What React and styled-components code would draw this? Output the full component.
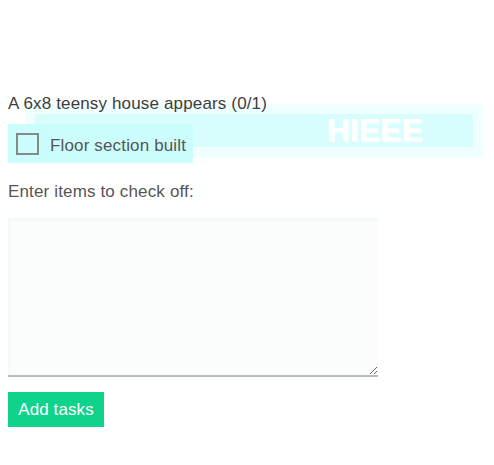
import React from "react";
import styled, { createGlobalStyle } from "styled-components";

const Global = createGlobalStyle`
  html, body { margin: 0; padding: 0; background: #fff; }
  body { font-family: "Liberation Sans", Arial, Helvetica, sans-serif; }
`;

const Page = styled.div`
  position: relative;
  padding: 94px 8px 20px 8px;
  display: flex;
  flex-direction: column;
  align-items: flex-start;
  letter-spacing: 0.15px;
`;

const Title = styled.div`
  font-size: 17px;
  line-height: 20px;
  color: #3d3d3d;
  position: relative;
  z-index: 1;
`;

const Overlay = styled.div`
  position: absolute;
  left: 25px;
  top: 104px;
  width: 458px;
  height: 53px;
  padding: 10px;
  box-sizing: border-box;
  background: #effefe;
  z-index: 0;
  display: flex;
`;

const OverlayInner = styled.div`
  flex: 1;
  background: #d8fdfd;
  display: flex;
  align-items: center;
  justify-content: flex-end;
  padding-right: 50px;
`;

const Shout = styled.span`
  font-size: 32px;
  font-weight: bold;
  line-height: 33px;
  letter-spacing: 0;
  color: #ffffff;
  text-shadow: 1px 1px 2px rgba(255, 255, 255, 0.9);
  filter: blur(0.3px);
`;

const TaskRow = styled.label`
  position: relative;
  z-index: 1;
  margin-top: 10px;
  height: 39px;
  box-sizing: border-box;
  padding: 0 7px 0 8px;
  background: #ccfdfd;
  display: flex;
  align-items: center;
  gap: 11px;
  font-size: 17px;
  color: #555;
`;

const Box = styled.span`
  width: 23px;
  height: 22px;
  box-sizing: border-box;
  border: 2px solid #888;
  background: transparent;
`;

const RowText = styled.span`
  line-height: 20px;
  margin-top: 4px;
`;

const FieldLabel = styled.div`
  margin-top: 19px;
  font-size: 17px;
  line-height: 20px;
  color: #555;
`;

const Area = styled.textarea`
  margin: 16px 0 0 0;
  width: 370px;
  height: 159px;
  box-sizing: border-box;
  border: none;
  border-bottom: 2px solid #bbb;
  background: #fbfdfd;
  box-shadow: inset 1px 2px 3px rgba(80, 160, 140, 0.07);
  outline: none;
  padding: 6px;
  font-family: inherit;
  font-size: 16px;
  display: block;
`;

const AddButton = styled.button`
  margin-top: 15px;
  width: 96px;
  height: 35px;
  border: none;
  background: #0fd38b;
  color: #fff;
  font-family: inherit;
  font-size: 17px;
  letter-spacing: 0.1px;
  padding: 0;
  cursor: pointer;
`;

export default function App() {
  return (
    <>
      <Global />
      <Page>
        <Overlay>
          <OverlayInner>
            <Shout>HIEEE</Shout>
          </OverlayInner>
        </Overlay>
        <Title>A 6x8 teensy house appears (0/1)</Title>
        <TaskRow>
          <Box />
          <RowText>Floor section built</RowText>
        </TaskRow>
        <FieldLabel>Enter items to check off:</FieldLabel>
        <Area />
        <AddButton>Add tasks</AddButton>
      </Page>
    </>
  );
}
